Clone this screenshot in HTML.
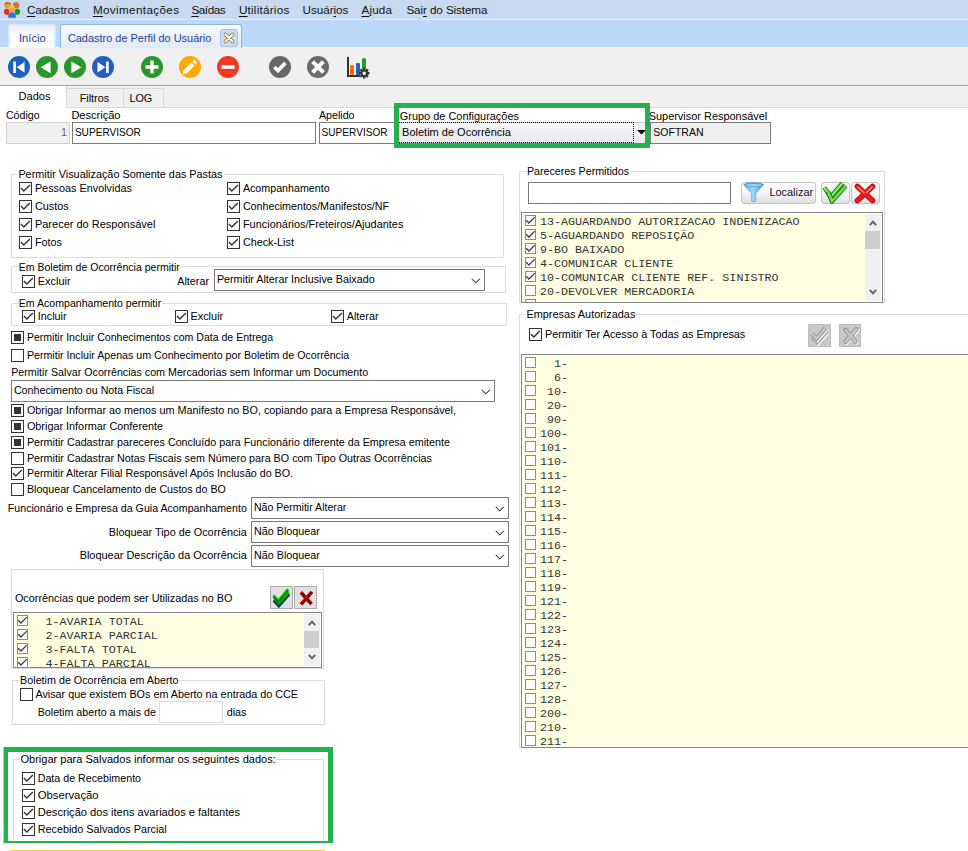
<!DOCTYPE html><html><head><meta charset="utf-8"><style>
*{margin:0;padding:0}
body{width:968px;height:851px;position:relative;overflow:hidden;background:#fff;font-family:"Liberation Sans",sans-serif;font-size:11px;color:#000}
.a{position:absolute}
.t{position:absolute;white-space:nowrap}
.m{position:absolute;white-space:pre;font-family:"Liberation Mono",monospace;color:#333}
.cb{position:absolute;width:13px;height:13px;box-sizing:border-box;border:1px solid #333;background:#fff}
.lcb{position:absolute;width:11px;height:11px;box-sizing:border-box;border:1px solid #8c8c8c;background:#fff}
.combo{position:absolute;box-sizing:border-box;border:1px solid #7a7a7a;background:#fff}
u{text-decoration:none;border-bottom:1px solid #000}
</style></head><body>
<div class="a" style="left:0px;top:0px;width:968px;height:19px;background:#c8daf0"></div>
<div class="a" style="left:0px;top:19px;width:968px;height:1px;background:#e6eef8"></div>
<div class="a" style="left:0px;top:20px;width:968px;height:27px;background:#bcd9fb"></div>
<div class="a" style="left:0px;top:47px;width:968px;height:1px;background:#f6f9fd"></div>
<svg class="a" style="left:0px;top:0px" width="24" height="19" viewBox="0 0 24 19">
<circle cx="7.8" cy="5.2" r="3.3" fill="#e89a3a"/><path d="M4.6,4.6 Q7.8,1 11,4.4" fill="none" stroke="#b87018" stroke-width="1.4"/>
<circle cx="16.1" cy="5.2" r="3.2" fill="#c47a36"/>
<ellipse cx="6.7" cy="11.8" rx="2.8" ry="3.1" fill="#e0321a"/>
<ellipse cx="17.4" cy="11.8" rx="2.7" ry="3.1" fill="#1f9a1f"/>
<path d="M8.2,17.8 Q7.8,12.3 12,12.3 Q16.2,12.3 15.9,17.8 Z" fill="#2a74e0"/>
<ellipse cx="12" cy="9.2" rx="2.9" ry="3.3" fill="#f3a04a"/>
<path d="M9.2,8 Q11,5 14.6,7.2" fill="none" stroke="#ffd21a" stroke-width="1.6"/>
</svg>
<div class="t" style="left:26.90px;top:0px;font-size:11.7px;line-height:20px;color:#111;letter-spacing:-0.06px"><span style="text-decoration:underline;text-underline-offset:1.5px">C</span>adastros</div>
<div class="t" style="left:92.90px;top:0px;font-size:11.7px;line-height:20px;color:#111;letter-spacing:0.36px"><span style="text-decoration:underline;text-underline-offset:1.5px">M</span>ovimentações</div>
<div class="t" style="left:191.40px;top:0px;font-size:11.7px;line-height:20px;color:#111;letter-spacing:-0.42px"><span style="text-decoration:underline;text-underline-offset:1.5px">S</span>aídas</div>
<div class="t" style="left:238.90px;top:0px;font-size:11.7px;line-height:20px;color:#111;letter-spacing:0.23px"><span style="text-decoration:underline;text-underline-offset:1.5px">U</span>tilitários</div>
<div class="t" style="left:302.60px;top:0px;font-size:11.7px;line-height:20px;color:#111;letter-spacing:-0.06px">Usuár<span style="text-decoration:underline;text-underline-offset:1.5px">i</span>os</div>
<div class="t" style="left:361.40px;top:0px;font-size:11.7px;line-height:20px;color:#111;letter-spacing:0.18px"><span style="text-decoration:underline;text-underline-offset:1.5px">A</span>juda</div>
<div class="t" style="left:406.40px;top:0px;font-size:11.7px;line-height:20px;color:#111;letter-spacing:-0.1px">Sai<span style="text-decoration:underline;text-underline-offset:1.5px">r</span> do Sistema</div>
<div class="a" style="left:8px;top:24px;width:48px;height:24px;box-sizing:border-box;border:1px solid #d6e6f8;border-bottom:none;border-radius:3px 3px 0 0;background:linear-gradient(#ededed,#fafafa 40%,#ffffff)"></div>
<div class="a" style="left:9px;top:33px;width:1px;height:14px;background:#c4f2ff"></div>
<div class="a" style="left:54px;top:33px;width:1px;height:14px;background:#c4f2ff"></div>
<div class="t" style="left:18.90px;top:28px;font-size:11.25px;line-height:20px;color:#2a3a8c;">Início</div>
<div class="a" style="left:60px;top:24px;width:182px;height:24px;box-sizing:border-box;border:1px solid #8fb4e6;border-bottom:none;border-radius:3px 3px 0 0;background:linear-gradient(#f7faff,#dfeafa)"></div>
<div class="t" style="left:67.90px;top:28px;font-size:10.95px;line-height:20px;color:#2a3a8c;">Cadastro de Perfil do Usuário</div>
<div class="a" style="left:220px;top:29px;width:18px;height:18px;box-sizing:border-box;border:1px solid #a6c0e6;border-radius:3px;background:#c9dbf2"></div>
<svg class="a" style="left:222px;top:31px" width="14" height="14"><path d="M3.5,3.5 L10.5,10.5 M10.5,3.5 L3.5,10.5" stroke="#8a7a3a" stroke-width="3.6" stroke-linecap="round"/><path d="M3.5,3.5 L10.5,10.5 M10.5,3.5 L3.5,10.5" stroke="#fff" stroke-width="2" stroke-linecap="round"/></svg>
<div class="a" style="left:0px;top:48px;width:968px;height:37px;background:#f0f0f0"></div>
<div class="a" style="left:0px;top:85px;width:968px;height:1px;background:#a0a0a0"></div>
<svg class="a" style="left:7px;top:54.7px" width="24" height="24" viewBox="0 0 24 24"><circle cx="12" cy="12" r="11" fill="#1f5fbd"/><rect x="6.3" y="6.5" width="2.6" height="11.5" fill="#fff"/><polygon points="9.6,12.2 17.5,7 17.5,17.5" fill="#fff"/></svg>
<svg class="a" style="left:35px;top:54.7px" width="24" height="24" viewBox="0 0 24 24"><circle cx="12" cy="12" r="11" fill="#2a972a"/><polygon points="5.7,12.3 15.6,6.5 15.6,18.2" fill="#fff"/></svg>
<svg class="a" style="left:63px;top:54.7px" width="24" height="24" viewBox="0 0 24 24"><circle cx="12" cy="12" r="11" fill="#2a972a"/><polygon points="18.3,12.3 8.4,6.5 8.4,18.2" fill="#fff"/></svg>
<svg class="a" style="left:91px;top:54.7px" width="24" height="24" viewBox="0 0 24 24"><circle cx="12" cy="12" r="11" fill="#1f5fbd"/><polygon points="6.5,7 14.4,12.2 6.5,17.5" fill="#fff"/><rect x="15.1" y="6.5" width="2.6" height="11.5" fill="#fff"/></svg>
<svg class="a" style="left:140px;top:54.5px" width="24" height="24" viewBox="0 0 24 24"><circle cx="12" cy="12" r="11" fill="#2a972a"/><rect x="10.3" y="5.5" width="3.4" height="13" fill="#fff"/><rect x="5.5" y="10.3" width="13" height="3.4" fill="#fff"/></svg>
<svg class="a" style="left:178px;top:54.5px" width="24" height="24" viewBox="0 0 24 24"><circle cx="12" cy="12" r="11" fill="#ffa800"/><polygon points="8.6,18.6 4.6,19.4 5.4,15.4 13.2,7.6 16.4,10.8" fill="#fff"/><polygon points="17.4,9.8 14.2,6.6 16.2,4.6 19.4,7.8" fill="#fff"/></svg>
<svg class="a" style="left:216px;top:54.5px" width="24" height="24" viewBox="0 0 24 24"><circle cx="12" cy="12" r="11" fill="#ef3a24"/><rect x="5.5" y="10.2" width="13" height="3.6" fill="#fff"/></svg>
<svg class="a" style="left:268px;top:54.5px" width="24" height="24" viewBox="0 0 24 24"><circle cx="12" cy="12" r="11" fill="#666666"/><polyline points="6.3,12 10,15.6 17.3,8" fill="none" stroke="#fff" stroke-width="3.6"/></svg>
<svg class="a" style="left:306px;top:54.7px" width="24" height="24" viewBox="0 0 24 24"><circle cx="12" cy="12" r="11" fill="#6b6b6b"/><path d="M6.6,6.6 L17.4,17.4 M17.4,6.6 L6.6,17.4" stroke="#fff" stroke-width="4"/></svg>
<svg class="a" style="left:347px;top:57px" width="24" height="24" viewBox="0 0 24 24">
<path d="M1,0 V19 H13" fill="none" stroke="#333" stroke-width="2"/>
<rect x="3" y="8" width="4" height="10" rx="1" fill="#ff6a00"/><rect x="9" y="6" width="4" height="12" rx="1" fill="#1c62c8"/><rect x="15" y="1.3" width="4" height="12" rx="1" fill="#2a9a2a"/>
<circle cx="17.2" cy="16.2" r="4.4" fill="#f0f0f0"/>
<rect x="16.00" y="10.90" width="2.4" height="3" fill="#333" transform="rotate(0 17.2 16.2)"/><rect x="16.00" y="10.90" width="2.4" height="3" fill="#333" transform="rotate(45 17.2 16.2)"/><rect x="16.00" y="10.90" width="2.4" height="3" fill="#333" transform="rotate(90 17.2 16.2)"/><rect x="16.00" y="10.90" width="2.4" height="3" fill="#333" transform="rotate(135 17.2 16.2)"/><rect x="16.00" y="10.90" width="2.4" height="3" fill="#333" transform="rotate(180 17.2 16.2)"/><rect x="16.00" y="10.90" width="2.4" height="3" fill="#333" transform="rotate(225 17.2 16.2)"/><rect x="16.00" y="10.90" width="2.4" height="3" fill="#333" transform="rotate(270 17.2 16.2)"/><rect x="16.00" y="10.90" width="2.4" height="3" fill="#333" transform="rotate(315 17.2 16.2)"/>
<circle cx="17.2" cy="16.2" r="3.6" fill="#333"/><circle cx="17.2" cy="16.2" r="1.7" fill="#fff"/>
</svg>
<div class="a" style="left:0px;top:86px;width:968px;height:21px;background:#f0f0f0"></div>
<div class="a" style="left:0px;top:107px;width:968px;height:1px;background:#d9d9d9"></div>
<div class="a" style="left:0px;top:86px;width:67px;height:22px;background:#fff;box-sizing:border-box;border-right:1px solid #d9d9d9"></div>
<div class="a" style="left:67px;top:88px;width:57px;height:20px;box-sizing:border-box;border:1px solid #d9d9d9;border-left:none;background:#f0f0f0"></div>
<div class="a" style="left:124px;top:88px;width:40px;height:20px;box-sizing:border-box;border:1px solid #d9d9d9;border-left:none;background:#f0f0f0"></div>
<div class="t" style="left:18.60px;top:86px;font-size:11.05px;line-height:20px;color:#000;">Dados</div>
<div class="t" style="left:79.70px;top:88px;font-size:10.8px;line-height:20px;color:#000;">Filtros</div>
<div class="t" style="left:129.40px;top:88px;font-size:10.8px;line-height:20px;color:#000;">LOG</div>
<div class="t" style="left:5.90px;top:105px;font-size:10.65px;line-height:20px;color:#000;">Código</div>
<div class="a" style="left:6px;top:122px;width:64px;height:22px;box-sizing:border-box;border:1px solid #cfcfcf;background:#f0f0f0"></div>
<div class="t" style="left:60.90px;top:122px;font-size:10.75px;line-height:20px;color:#6d5d7d;">1</div>
<div class="t" style="left:71.40px;top:105px;font-size:11.05px;line-height:20px;color:#000;">Descrição</div>
<div class="a" style="left:72px;top:122px;width:244px;height:22px;box-sizing:border-box;border:1px solid #7a7a7a;background:#fff"></div>
<div class="t" style="left:74.90px;top:123px;font-size:10.1px;line-height:20px;color:#000;">SUPERVISOR</div>
<div class="t" style="left:318.90px;top:105px;font-size:10.7px;line-height:20px;color:#000;">Apelido</div>
<div class="a" style="left:319px;top:122px;width:80px;height:22px;box-sizing:border-box;border:1px solid #7a7a7a;background:#fff"></div>
<div class="t" style="left:321.60px;top:123px;font-size:10.1px;line-height:20px;color:#000;">SUPERVISOR</div>
<div class="a" style="left:398px;top:122px;width:249px;height:21px;box-sizing:border-box;border-top:1px solid #c9c9cf;background:linear-gradient(#f6f6f8,#e9e9ee)"></div>
<div class="a" style="left:396px;top:122px;width:238px;height:21px;box-sizing:border-box;border:1px dotted #111"></div>
<svg class="a" style="left:637px;top:130px" width="9" height="5"><polygon points="0,0 9,0 4.5,4.5" fill="#000"/></svg>
<div class="t" style="left:399.80px;top:106px;font-size:10.95px;line-height:20px;color:#000;">Grupo de Configurações</div>
<div class="t" style="left:402.10px;top:122px;font-size:11.0px;line-height:20px;color:#000;">Boletim de Ocorrência</div>
<div class="t" style="left:648.70px;top:106px;font-size:10.95px;line-height:20px;color:#000;">Supervisor Responsável</div>
<div class="a" style="left:650px;top:122px;width:121px;height:22px;box-sizing:border-box;border:1px solid #7a7a7a;background:#f0f0f0"></div>
<div class="t" style="left:653.30px;top:122px;font-size:10.5px;line-height:20px;color:#000;">SOFTRAN</div>
<div class="a" style="left:394px;top:103px;width:256px;height:45px;box-sizing:border-box;border:5px solid #22b14c"></div>
<div class="a" style="left:11px;top:174px;width:493px;height:84px;border:1px solid #dcdcdc;box-sizing:border-box"></div>
<div class="t" style="left:18.40px;top:164px;font-size:10.85px;line-height:20px;color:#000;"><span style="background:#fff;padding-right:1px">Permitir Visualização Somente das Pastas</span></div>
<div class="cb" style="left:19px;top:182px"><svg width="13" height="13" style="position:absolute;left:0;top:0"><polyline points="0.9,5 3.8,7.9 9.9,1.9" fill="none" stroke="#333" stroke-width="1.4"/></svg></div>
<div class="t" style="left:34.90px;top:178px;font-size:10.85px;line-height:20px;color:#000;">Pessoas Envolvidas</div>
<div class="cb" style="left:227px;top:182px"><svg width="13" height="13" style="position:absolute;left:0;top:0"><polyline points="0.9,5 3.8,7.9 9.9,1.9" fill="none" stroke="#333" stroke-width="1.4"/></svg></div>
<div class="t" style="left:242.90px;top:178px;font-size:10.7px;line-height:20px;color:#000;">Acompanhamento</div>
<div class="cb" style="left:19px;top:200px"><svg width="13" height="13" style="position:absolute;left:0;top:0"><polyline points="0.9,5 3.8,7.9 9.9,1.9" fill="none" stroke="#333" stroke-width="1.4"/></svg></div>
<div class="t" style="left:34.90px;top:196px;font-size:10.9px;line-height:20px;color:#000;">Custos</div>
<div class="cb" style="left:227px;top:200px"><svg width="13" height="13" style="position:absolute;left:0;top:0"><polyline points="0.9,5 3.8,7.9 9.9,1.9" fill="none" stroke="#333" stroke-width="1.4"/></svg></div>
<div class="t" style="left:242.90px;top:196px;font-size:10.7px;line-height:20px;color:#000;">Conhecimentos/Manifestos/NF</div>
<div class="cb" style="left:19px;top:218px"><svg width="13" height="13" style="position:absolute;left:0;top:0"><polyline points="0.9,5 3.8,7.9 9.9,1.9" fill="none" stroke="#333" stroke-width="1.4"/></svg></div>
<div class="t" style="left:34.90px;top:214px;font-size:11.0px;line-height:20px;color:#000;">Parecer do Responsável</div>
<div class="cb" style="left:227px;top:218px"><svg width="13" height="13" style="position:absolute;left:0;top:0"><polyline points="0.9,5 3.8,7.9 9.9,1.9" fill="none" stroke="#333" stroke-width="1.4"/></svg></div>
<div class="t" style="left:242.90px;top:214px;font-size:10.95px;line-height:20px;color:#000;">Funcionários/Freteiros/Ajudantes</div>
<div class="cb" style="left:19px;top:236px"><svg width="13" height="13" style="position:absolute;left:0;top:0"><polyline points="0.9,5 3.8,7.9 9.9,1.9" fill="none" stroke="#333" stroke-width="1.4"/></svg></div>
<div class="t" style="left:34.90px;top:232px;font-size:10.8px;line-height:20px;color:#000;">Fotos</div>
<div class="cb" style="left:227px;top:236px"><svg width="13" height="13" style="position:absolute;left:0;top:0"><polyline points="0.9,5 3.8,7.9 9.9,1.9" fill="none" stroke="#333" stroke-width="1.4"/></svg></div>
<div class="t" style="left:242.90px;top:232px;font-size:10.8px;line-height:20px;color:#000;">Check-List</div>
<div class="a" style="left:11px;top:266px;width:495px;height:27px;border:1px solid #dcdcdc;box-sizing:border-box"></div>
<div class="t" style="left:18.70px;top:257px;font-size:10.55px;line-height:20px;color:#000;"><span style="background:#fff;padding-right:1px">Em Boletim de Ocorrência permitir</span></div>
<div class="cb" style="left:22px;top:275px"><svg width="13" height="13" style="position:absolute;left:0;top:0"><polyline points="0.9,5 3.8,7.9 9.9,1.9" fill="none" stroke="#333" stroke-width="1.4"/></svg></div>
<div class="t" style="left:37.80px;top:271px;font-size:10.95px;line-height:20px;color:#000;">Excluir</div>
<div class="t" style="left:177.20px;top:271px;font-size:10.8px;line-height:20px;color:#000;">Alterar</div>
<div class="combo" style="left:214px;top:269px;width:271px;height:22px"><svg width="10" height="6" style="position:absolute;right:3px;top:50%;margin-top:-2px"><polyline points="0.8,0.8 4.8,4.8 8.8,0.8" fill="none" stroke="#404040" stroke-width="1.05"/></svg></div>
<div class="t" style="left:216.90px;top:269px;font-size:10.75px;line-height:20px;color:#000;">Permitir Alterar Inclusive Baixado</div>
<div class="a" style="left:11px;top:303px;width:496px;height:23px;border:1px solid #dcdcdc;box-sizing:border-box"></div>
<div class="t" style="left:18.70px;top:293px;font-size:10.6px;line-height:20px;color:#000;"><span style="background:#fff;padding-right:1px">Em Acompanhamento permitir</span></div>
<div class="cb" style="left:22px;top:310px"><svg width="13" height="13" style="position:absolute;left:0;top:0"><polyline points="0.9,5 3.8,7.9 9.9,1.9" fill="none" stroke="#333" stroke-width="1.4"/></svg></div>
<div class="t" style="left:37.80px;top:306px;font-size:10.8px;line-height:20px;color:#000;">Incluir</div>
<div class="cb" style="left:175px;top:310px"><svg width="13" height="13" style="position:absolute;left:0;top:0"><polyline points="0.9,5 3.8,7.9 9.9,1.9" fill="none" stroke="#333" stroke-width="1.4"/></svg></div>
<div class="t" style="left:190.40px;top:306px;font-size:10.95px;line-height:20px;color:#000;">Excluir</div>
<div class="cb" style="left:331px;top:310px"><svg width="13" height="13" style="position:absolute;left:0;top:0"><polyline points="0.9,5 3.8,7.9 9.9,1.9" fill="none" stroke="#333" stroke-width="1.4"/></svg></div>
<div class="t" style="left:346.70px;top:306px;font-size:10.8px;line-height:20px;color:#000;">Alterar</div>
<div class="cb" style="left:11px;top:331px"><div class="a" style="left:2px;top:2px;width:7px;height:7px;background:#333"></div></div>
<div class="t" style="left:26.90px;top:327px;font-size:10.55px;line-height:20px;color:#000;">Permitir Incluir Conhecimentos com Data de Entrega</div>
<div class="cb" style="left:11px;top:349px"></div>
<div class="t" style="left:26.90px;top:345px;font-size:10.65px;line-height:20px;color:#000;">Permitir Incluir Apenas um Conhecimento por Boletim de Ocorrência</div>
<div class="t" style="left:11.20px;top:362px;font-size:10.7px;line-height:20px;color:#000;">Permitir Salvar Ocorrências com Mercadorias sem Informar um Documento</div>
<div class="combo" style="left:11px;top:380px;width:484px;height:22px"><svg width="10" height="6" style="position:absolute;right:3px;top:50%;margin-top:-2px"><polyline points="0.8,0.8 4.8,4.8 8.8,0.8" fill="none" stroke="#404040" stroke-width="1.05"/></svg></div>
<div class="t" style="left:13.90px;top:380px;font-size:10.7px;line-height:20px;color:#000;">Conhecimento ou Nota Fiscal</div>
<div class="cb" style="left:11px;top:404px"><div class="a" style="left:2px;top:2px;width:7px;height:7px;background:#333"></div></div>
<div class="t" style="left:26.90px;top:400px;font-size:10.8px;line-height:20px;color:#000;">Obrigar Informar ao menos um Manifesto no BO, copiando para a Empresa Responsável,</div>
<div class="cb" style="left:11px;top:420px"><div class="a" style="left:2px;top:2px;width:7px;height:7px;background:#333"></div></div>
<div class="t" style="left:26.90px;top:416px;font-size:10.85px;line-height:20px;color:#000;">Obrigar Informar Conferente</div>
<div class="cb" style="left:11px;top:436px"><div class="a" style="left:2px;top:2px;width:7px;height:7px;background:#333"></div></div>
<div class="t" style="left:26.90px;top:432px;font-size:10.75px;line-height:20px;color:#000;">Permitir Cadastrar pareceres Concluído para Funcionário diferente da Empresa emitente</div>
<div class="cb" style="left:11px;top:452px"></div>
<div class="t" style="left:26.90px;top:448px;font-size:10.75px;line-height:20px;color:#000;">Permitir Cadastrar Notas Fiscais sem Número para BO com Tipo Outras Ocorrências</div>
<div class="cb" style="left:11px;top:467px"><svg width="13" height="13" style="position:absolute;left:0;top:0"><polyline points="0.9,5 3.8,7.9 9.9,1.9" fill="none" stroke="#333" stroke-width="1.4"/></svg></div>
<div class="t" style="left:26.90px;top:463px;font-size:10.7px;line-height:20px;color:#000;">Permitir Alterar Filial Responsável Após Inclusão do BO.</div>
<div class="cb" style="left:11px;top:483px"></div>
<div class="t" style="left:26.90px;top:479px;font-size:10.7px;line-height:20px;color:#000;">Bloquear Cancelamento de Custos do BO</div>
<div class="t" style="right:721.2px;top:498px;font-size:10.65px;line-height:20px;color:#000">Funcionário e Empresa da Guia Acompanhamento</div>
<div class="combo" style="left:251px;top:497px;width:258px;height:22px"><svg width="10" height="6" style="position:absolute;right:3px;top:50%;margin-top:-2px"><polyline points="0.8,0.8 4.8,4.8 8.8,0.8" fill="none" stroke="#404040" stroke-width="1.05"/></svg></div>
<div class="t" style="left:253.90px;top:497px;font-size:10.6px;line-height:20px;color:#000;">Não Permitir Alterar</div>
<div class="t" style="right:721.2px;top:522px;font-size:10.85px;line-height:20px;color:#000">Bloquear Tipo de Ocorrência</div>
<div class="combo" style="left:251px;top:521px;width:258px;height:22px"><svg width="10" height="6" style="position:absolute;right:3px;top:50%;margin-top:-2px"><polyline points="0.8,0.8 4.8,4.8 8.8,0.8" fill="none" stroke="#404040" stroke-width="1.05"/></svg></div>
<div class="t" style="left:253.90px;top:521px;font-size:10.8px;line-height:20px;color:#000;">Não Bloquear</div>
<div class="t" style="right:721.2px;top:545px;font-size:10.95px;line-height:20px;color:#000">Bloquear Descrição da Ocorrência</div>
<div class="combo" style="left:251px;top:545px;width:258px;height:22px"><svg width="10" height="6" style="position:absolute;right:3px;top:50%;margin-top:-2px"><polyline points="0.8,0.8 4.8,4.8 8.8,0.8" fill="none" stroke="#404040" stroke-width="1.05"/></svg></div>
<div class="t" style="left:253.90px;top:545px;font-size:10.8px;line-height:20px;color:#000;">Não Bloquear</div>
<div class="a" style="left:11px;top:569px;width:313px;height:100px;border:1px solid #dcdcdc;box-sizing:border-box"></div>
<div class="t" style="left:14.90px;top:588px;font-size:10.85px;line-height:20px;color:#000;">Ocorrências que podem ser Utilizadas no BO</div>
<div class="a" style="left:270px;top:586px;width:23px;height:23px;box-sizing:border-box;border:1px solid #adadad;background:#e1e1e1"><svg class="a" style="left:0;top:0" width="21" height="21" viewBox="0 0 21 21"><polyline points="3,13.6 7.9,18.8 17.8,7.4" fill="none" stroke="#000080" stroke-width="3"/><polyline points="3,12.2 7.9,17.4 17.8,6" fill="none" stroke="#008000" stroke-width="3"/><polyline points="2.6,11 7.9,16.2 17.8,4.8" fill="none" stroke="#00e000" stroke-width="1"/><polyline points="2.5,8.9 7.4,14.1 17,2.6" fill="none" stroke="#008000" stroke-width="3"/><polyline points="2.1,7.7 7.4,12.9 17,1.4" fill="none" stroke="#00f000" stroke-width="1"/></svg></div>
<div class="a" style="left:294px;top:586px;width:23px;height:23px;box-sizing:border-box;border:1px solid #adadad;background:#e1e1e1"><svg class="a" style="left:0;top:0" width="21" height="21" viewBox="0 0 21 21"><path d="M6,5.5 L16.5,17 M17,4.8 L6,17.4" stroke="#800000" stroke-width="3.4"/><path d="M4.9,6.4 L7.2,4.4 M4.9,16.4 L15.8,4.2" stroke="#ff1010" stroke-width="1"/></svg></div>
<div class="a" style="left:13px;top:612px;width:309px;height:56px;box-sizing:border-box;border:1px solid #82878f;background:#ffffe1;box-shadow:inset 0 0 0 1px #fff;overflow:hidden">
<div class="lcb" style="left:3px;top:2px"><svg width="11" height="11" style="position:absolute;left:0;top:0"><polyline points="0.2,4.3 2.9,7 8.8,1.1" fill="none" stroke="#3a3a3a" stroke-width="1.25"/></svg></div>
<div class="m" style="left:17.5px;top:1.98px;font-size:11.7px;line-height:14px">  1-AVARIA TOTAL</div>
<div class="lcb" style="left:3px;top:16px"><svg width="11" height="11" style="position:absolute;left:0;top:0"><polyline points="0.2,4.3 2.9,7 8.8,1.1" fill="none" stroke="#3a3a3a" stroke-width="1.25"/></svg></div>
<div class="m" style="left:17.5px;top:15.98px;font-size:11.7px;line-height:14px">  2-AVARIA PARCIAL</div>
<div class="lcb" style="left:3px;top:30px"><svg width="11" height="11" style="position:absolute;left:0;top:0"><polyline points="0.2,4.3 2.9,7 8.8,1.1" fill="none" stroke="#3a3a3a" stroke-width="1.25"/></svg></div>
<div class="m" style="left:17.5px;top:29.98px;font-size:11.7px;line-height:14px">  3-FALTA TOTAL</div>
<div class="lcb" style="left:3px;top:44px"><svg width="11" height="11" style="position:absolute;left:0;top:0"><polyline points="0.2,4.3 2.9,7 8.8,1.1" fill="none" stroke="#3a3a3a" stroke-width="1.25"/></svg></div>
<div class="m" style="left:17.5px;top:43.98px;font-size:11.7px;line-height:14px">  4-FALTA PARCIAL</div>
<div class="a" style="left:290px;top:1px;width:16px;height:52px;background:#f0f0f0"></div>
<div class="a" style="left:290px;top:18px;width:15px;height:17px;background:#cdcdcd"></div>
<svg class="a" style="left:294px;top:7px" width="8" height="6"><polyline points="0.8,5.2 4,1.6 7.2,5.2" fill="none" stroke="#606060" stroke-width="1.9"/></svg>
<svg class="a" style="left:294px;top:41px" width="8" height="6"><polyline points="0.8,0.8 4,4.4 7.2,0.8" fill="none" stroke="#606060" stroke-width="1.9"/></svg>
</div>
<div class="a" style="left:12px;top:680px;width:313px;height:45px;border:1px solid #dcdcdc;box-sizing:border-box"></div>
<div class="t" style="left:20.10px;top:670px;font-size:10.75px;line-height:20px;color:#000;"><span style="background:#fff;padding-right:1px">Boletim de Ocorrência em Aberto</span></div>
<div class="cb" style="left:20px;top:688px"></div>
<div class="t" style="left:35.40px;top:684px;font-size:10.8px;line-height:20px;color:#000;">Avisar que existem BOs em Aberto na entrada do CCE</div>
<div class="t" style="left:37.70px;top:702px;font-size:10.7px;line-height:20px;color:#000;">Boletim aberto a mais de</div>
<div class="a" style="left:159px;top:701px;width:64px;height:22px;box-sizing:border-box;border:1px solid #d9d9d9;background:#fff"></div>
<div class="t" style="left:226.70px;top:702px;font-size:10.8px;line-height:20px;color:#000;">dias</div>
<div class="a" style="left:3px;top:747px;width:1px;height:98px;background:#f5d020"></div>
<div class="a" style="left:10px;top:850px;width:315px;height:1px;background:#f5d020"></div>
<div class="a" style="left:13px;top:759px;width:311px;height:84px;border:1px solid #dcdcdc;box-sizing:border-box"></div>
<div class="t" style="left:20.40px;top:749px;font-size:11.05px;line-height:20px;color:#000;"><span style="background:#fff;padding-right:1px">Obrigar para Salvados informar os seguintes dados:</span></div>
<div class="cb" style="left:22px;top:772px"><svg width="13" height="13" style="position:absolute;left:0;top:0"><polyline points="0.9,5 3.8,7.9 9.9,1.9" fill="none" stroke="#333" stroke-width="1.4"/></svg></div>
<div class="t" style="left:37.70px;top:768px;font-size:10.7px;line-height:20px;color:#000;">Data de Recebimento</div>
<div class="cb" style="left:22px;top:789px"><svg width="13" height="13" style="position:absolute;left:0;top:0"><polyline points="0.9,5 3.8,7.9 9.9,1.9" fill="none" stroke="#333" stroke-width="1.4"/></svg></div>
<div class="t" style="left:37.70px;top:785px;font-size:11.3px;line-height:20px;color:#000;">Observação</div>
<div class="cb" style="left:22px;top:806px"><svg width="13" height="13" style="position:absolute;left:0;top:0"><polyline points="0.9,5 3.8,7.9 9.9,1.9" fill="none" stroke="#333" stroke-width="1.4"/></svg></div>
<div class="t" style="left:37.70px;top:802px;font-size:11.1px;line-height:20px;color:#000;">Descrição dos itens avariados e faltantes</div>
<div class="cb" style="left:22px;top:823px"><svg width="13" height="13" style="position:absolute;left:0;top:0"><polyline points="0.9,5 3.8,7.9 9.9,1.9" fill="none" stroke="#333" stroke-width="1.4"/></svg></div>
<div class="t" style="left:37.70px;top:819px;font-size:10.8px;line-height:20px;color:#000;">Recebido Salvados Parcial</div>
<div class="a" style="left:4px;top:747px;width:329px;height:96px;box-sizing:border-box;border:solid #22b14c;border-width:5px 5px 2px 4px"></div>
<div class="a" style="left:12px;top:842px;width:321px;height:1px;background:#22b14c"></div>
<div class="a" style="left:519px;top:171px;width:366px;height:132px;border:1px solid #dcdcdc;box-sizing:border-box"></div>
<div class="t" style="left:526.90px;top:161px;font-size:10.7px;line-height:20px;color:#000;"><span style="background:#fff;padding-right:1px">Pareceres Permitidos</span></div>
<div class="a" style="left:528px;top:182px;width:203px;height:22px;box-sizing:border-box;border:1px solid #7a7a7a;background:#fff"></div>
<div class="a" style="left:741px;top:182px;width:75px;height:22px;box-sizing:border-box;border:1px solid #c4c4c4;border-radius:3px;background:linear-gradient(#fafafa,#fafafa 40%,#dedede)"></div><svg class="a" style="left:743px;top:182px" width="22" height="21" viewBox="0 0 22 21"><defs><linearGradient id="fg" x1="0" x2="1"><stop offset="0" stop-color="#4a9ee0"/><stop offset=".45" stop-color="#a6d8f8"/><stop offset="1" stop-color="#3d8fd6"/></linearGradient></defs><path d="M0.8,2.6 L8.6,11.5 V19 Q10.6,21 12.8,19 V11.5 L20.6,2.6 Z" fill="url(#fg)" stroke="#5a9fd8" stroke-width=".6"/><ellipse cx="10.7" cy="2.7" rx="9.9" ry="2.4" fill="#4f9fe0"/><ellipse cx="10.7" cy="3.2" rx="8" ry="1.3" fill="#9fd2f6"/></svg>
<div class="t" style="left:769.40px;top:182px;font-size:10.95px;line-height:20px;color:#1a0a2a;">Localizar</div>
<div class="a" style="left:821px;top:182px;width:29px;height:22px;box-sizing:border-box;border:1px solid #c4c4c4;border-radius:3px;background:linear-gradient(#fafafa,#fafafa 40%,#dedede)"></div><svg class="a" style="left:821px;top:182px" width="29" height="22" viewBox="0 0 29 22"><path d="M3.2,5.5 L9.7,15 L21.6,1" fill="none" stroke="#138a13" stroke-width="4.4" stroke-linejoin="miter"/><path d="M3.2,5.5 L9.7,15 L21.6,1" fill="none" stroke="#9be86a" stroke-width="2.2"/><path d="M7,9.5 L11,19.2 L24.8,3.8" fill="none" stroke="#0f7a1a" stroke-width="4.6"/><path d="M7,9.5 L11,19.2 L24.8,3.8" fill="none" stroke="#7ad84a" stroke-width="2.6"/></svg>
<div class="a" style="left:851px;top:182px;width:29px;height:22px;box-sizing:border-box;border:1px solid #c4c4c4;border-radius:3px;background:linear-gradient(#fafafa,#fafafa 40%,#dedede)"></div><svg class="a" style="left:851px;top:182px" width="29" height="22" viewBox="0 0 29 22"><path d="M6.5,4.5 L21.5,18.5 M21.5,4.5 L6.5,18.5" stroke="#b80c0c" stroke-width="5.6" stroke-linecap="round"/><path d="M6.5,4.5 L21.5,18.5 M21.5,4.5 L6.5,18.5" stroke="#ec1a1a" stroke-width="3.8" stroke-linecap="round"/><path d="M7,5.2 L13,10.8 M21,5.2 L15.5,10.5" stroke="#ff9a9a" stroke-width="1.2" stroke-linecap="round"/></svg>
<div class="a" style="left:521px;top:212px;width:362px;height:91px;box-sizing:border-box;border:1px solid #82878f;background:#ffffe1;box-shadow:inset 0 0 0 1px #fff;overflow:hidden">
<div class="lcb" style="left:3px;top:2px"><svg width="11" height="11" style="position:absolute;left:0;top:0"><polyline points="0.2,4.3 2.9,7 8.8,1.1" fill="none" stroke="#3a3a3a" stroke-width="1.25"/></svg></div>
<div class="m" style="left:18px;top:1.98px;font-size:11.7px;line-height:14px">13-AGUARDANDO AUTORIZACAO INDENIZACAO</div>
<div class="lcb" style="left:3px;top:16px"><svg width="11" height="11" style="position:absolute;left:0;top:0"><polyline points="0.2,4.3 2.9,7 8.8,1.1" fill="none" stroke="#3a3a3a" stroke-width="1.25"/></svg></div>
<div class="m" style="left:18px;top:15.98px;font-size:11.7px;line-height:14px">5-AGUARDANDO REPOSIÇÃO</div>
<div class="lcb" style="left:3px;top:30px"><svg width="11" height="11" style="position:absolute;left:0;top:0"><polyline points="0.2,4.3 2.9,7 8.8,1.1" fill="none" stroke="#3a3a3a" stroke-width="1.25"/></svg></div>
<div class="m" style="left:18px;top:29.98px;font-size:11.7px;line-height:14px">9-BO BAIXADO</div>
<div class="lcb" style="left:3px;top:44px"><svg width="11" height="11" style="position:absolute;left:0;top:0"><polyline points="0.2,4.3 2.9,7 8.8,1.1" fill="none" stroke="#3a3a3a" stroke-width="1.25"/></svg></div>
<div class="m" style="left:18px;top:43.98px;font-size:11.7px;line-height:14px">4-COMUNICAR CLIENTE</div>
<div class="lcb" style="left:3px;top:58px"><svg width="11" height="11" style="position:absolute;left:0;top:0"><polyline points="0.2,4.3 2.9,7 8.8,1.1" fill="none" stroke="#3a3a3a" stroke-width="1.25"/></svg></div>
<div class="m" style="left:18px;top:57.98px;font-size:11.7px;line-height:14px">10-COMUNICAR CLIENTE REF. SINISTRO</div>
<div class="lcb" style="left:3px;top:72px"></div>
<div class="m" style="left:18px;top:71.98px;font-size:11.7px;line-height:14px">20-DEVOLVER MERCADORIA</div>
<div class="lcb" style="left:3px;top:86px"></div>
<div class="m" style="left:18px;top:85.98px;font-size:11.7px;line-height:14px"></div>
<div class="a" style="left:343px;top:1px;width:16px;height:87px;background:#f0f0f0"></div>
<div class="a" style="left:343px;top:18px;width:15px;height:18px;background:#cdcdcd"></div>
<svg class="a" style="left:347px;top:7px" width="8" height="6"><polyline points="0.8,5.2 4,1.6 7.2,5.2" fill="none" stroke="#606060" stroke-width="1.9"/></svg>
<svg class="a" style="left:347px;top:76px" width="8" height="6"><polyline points="0.8,0.8 4,4.4 7.2,0.8" fill="none" stroke="#606060" stroke-width="1.9"/></svg>
</div>
<div class="a" style="left:519px;top:314px;width:460px;height:434px;border:1px solid #dcdcdc;box-sizing:border-box"></div>
<div class="t" style="left:526.40px;top:304px;font-size:10.9px;line-height:20px;color:#000;"><span style="background:#fff;padding-right:1px">Empresas Autorizadas</span></div>
<div class="cb" style="left:529px;top:328px"><svg width="13" height="13" style="position:absolute;left:0;top:0"><polyline points="0.9,5 3.8,7.9 9.9,1.9" fill="none" stroke="#333" stroke-width="1.4"/></svg></div>
<div class="t" style="left:545.00px;top:324px;font-size:10.85px;line-height:20px;color:#000;">Permitir Ter Acesso à Todas as Empresas</div>
<div class="a" style="left:808px;top:324px;width:23px;height:23px;box-sizing:border-box;border:1px solid #bdbdbd;background:#c8c8c8"><svg class="a" style="left:0;top:0" width="21" height="21" viewBox="0 0 21 21"><polyline points="3.6,12.2 8.2,17.2 17.8,6.2" transform="translate(0.8,0.8)" fill="none" stroke="#fff" stroke-width="4.2"/><polyline points="3.6,12.2 8.2,17.2 17.8,6.2" fill="none" stroke="#8c8c8c" stroke-width="4.2"/><polyline points="3.6,12.2 8.2,17.2 17.8,6.2" fill="none" stroke="#c8c8c8" stroke-width="2.4"/><polyline points="3.2,8.9 7.6,13.6 16.8,2.6" transform="translate(0.8,0.8)" fill="none" stroke="#fff" stroke-width="4.2"/><polyline points="3.2,8.9 7.6,13.6 16.8,2.6" fill="none" stroke="#8c8c8c" stroke-width="4.2"/><polyline points="3.2,8.9 7.6,13.6 16.8,2.6" fill="none" stroke="#c8c8c8" stroke-width="2.4"/></svg></div>
<div class="a" style="left:839px;top:324px;width:22px;height:23px;box-sizing:border-box;border:1px solid #bdbdbd;background:#c8c8c8"><svg class="a" style="left:0;top:0" width="21" height="21" viewBox="0 0 21 21"><path d="M5.6,5 L15.6,16.6 M16.4,4.4 L5.6,16.8" transform="translate(0.8,0.8)" stroke="#fff" stroke-width="4.4" stroke-linecap="round"/><path d="M5.6,5 L15.6,16.6 M16.4,4.4 L5.6,16.8" stroke="#8c8c8c" stroke-width="4.4" stroke-linecap="round"/><path d="M5.6,5 L15.6,16.6 M16.4,4.4 L5.6,16.8" stroke="#c8c8c8" stroke-width="2.6" stroke-linecap="round"/></svg></div>
<div class="a" style="left:521px;top:354px;width:460px;height:394px;box-sizing:border-box;border:1px solid #82878f;background:#ffffe1;box-shadow:inset 0 0 0 1px #fff;overflow:hidden">
<div class="lcb" style="left:3px;top:2px"></div>
<div class="m" style="left:18px;top:1.98px;font-size:11.7px;line-height:14px">  1-</div>
<div class="lcb" style="left:3px;top:16px"></div>
<div class="m" style="left:18px;top:15.98px;font-size:11.7px;line-height:14px">  6-</div>
<div class="lcb" style="left:3px;top:30px"></div>
<div class="m" style="left:18px;top:29.98px;font-size:11.7px;line-height:14px"> 10-</div>
<div class="lcb" style="left:3px;top:44px"></div>
<div class="m" style="left:18px;top:43.98px;font-size:11.7px;line-height:14px"> 20-</div>
<div class="lcb" style="left:3px;top:58px"></div>
<div class="m" style="left:18px;top:57.98px;font-size:11.7px;line-height:14px"> 90-</div>
<div class="lcb" style="left:3px;top:72px"></div>
<div class="m" style="left:18px;top:71.98px;font-size:11.7px;line-height:14px">100-</div>
<div class="lcb" style="left:3px;top:86px"></div>
<div class="m" style="left:18px;top:85.98px;font-size:11.7px;line-height:14px">101-</div>
<div class="lcb" style="left:3px;top:100px"></div>
<div class="m" style="left:18px;top:99.98px;font-size:11.7px;line-height:14px">110-</div>
<div class="lcb" style="left:3px;top:114px"></div>
<div class="m" style="left:18px;top:113.98px;font-size:11.7px;line-height:14px">111-</div>
<div class="lcb" style="left:3px;top:128px"></div>
<div class="m" style="left:18px;top:127.98px;font-size:11.7px;line-height:14px">112-</div>
<div class="lcb" style="left:3px;top:142px"></div>
<div class="m" style="left:18px;top:141.98px;font-size:11.7px;line-height:14px">113-</div>
<div class="lcb" style="left:3px;top:156px"></div>
<div class="m" style="left:18px;top:155.98px;font-size:11.7px;line-height:14px">114-</div>
<div class="lcb" style="left:3px;top:170px"></div>
<div class="m" style="left:18px;top:169.98px;font-size:11.7px;line-height:14px">115-</div>
<div class="lcb" style="left:3px;top:184px"></div>
<div class="m" style="left:18px;top:183.98px;font-size:11.7px;line-height:14px">116-</div>
<div class="lcb" style="left:3px;top:198px"></div>
<div class="m" style="left:18px;top:197.98px;font-size:11.7px;line-height:14px">117-</div>
<div class="lcb" style="left:3px;top:212px"></div>
<div class="m" style="left:18px;top:211.98px;font-size:11.7px;line-height:14px">118-</div>
<div class="lcb" style="left:3px;top:226px"></div>
<div class="m" style="left:18px;top:225.98px;font-size:11.7px;line-height:14px">119-</div>
<div class="lcb" style="left:3px;top:240px"></div>
<div class="m" style="left:18px;top:239.98px;font-size:11.7px;line-height:14px">121-</div>
<div class="lcb" style="left:3px;top:254px"></div>
<div class="m" style="left:18px;top:253.98px;font-size:11.7px;line-height:14px">122-</div>
<div class="lcb" style="left:3px;top:268px"></div>
<div class="m" style="left:18px;top:267.98px;font-size:11.7px;line-height:14px">123-</div>
<div class="lcb" style="left:3px;top:282px"></div>
<div class="m" style="left:18px;top:281.98px;font-size:11.7px;line-height:14px">124-</div>
<div class="lcb" style="left:3px;top:296px"></div>
<div class="m" style="left:18px;top:295.98px;font-size:11.7px;line-height:14px">125-</div>
<div class="lcb" style="left:3px;top:310px"></div>
<div class="m" style="left:18px;top:309.98px;font-size:11.7px;line-height:14px">126-</div>
<div class="lcb" style="left:3px;top:324px"></div>
<div class="m" style="left:18px;top:323.98px;font-size:11.7px;line-height:14px">127-</div>
<div class="lcb" style="left:3px;top:338px"></div>
<div class="m" style="left:18px;top:337.98px;font-size:11.7px;line-height:14px">128-</div>
<div class="lcb" style="left:3px;top:352px"></div>
<div class="m" style="left:18px;top:351.98px;font-size:11.7px;line-height:14px">200-</div>
<div class="lcb" style="left:3px;top:366px"></div>
<div class="m" style="left:18px;top:365.98px;font-size:11.7px;line-height:14px">210-</div>
<div class="lcb" style="left:3px;top:380px"></div>
<div class="m" style="left:18px;top:379.98px;font-size:11.7px;line-height:14px">211-</div>
</div>
</body></html>
